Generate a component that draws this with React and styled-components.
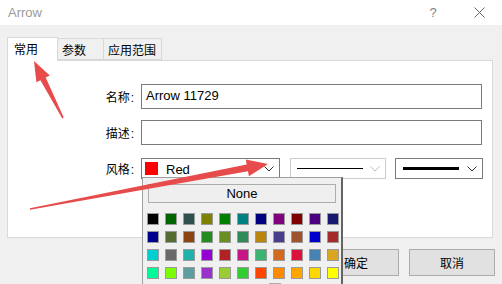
import styled, { createGlobalStyle } from 'styled-components';

const GlobalStyle = createGlobalStyle`
  html, body {
    margin: 0;
    padding: 0;
    background: #f0f0f0;
  }
  * {
    box-sizing: border-box;
  }
`;

const Window = styled.div`
  position: relative;
  width: 502px;
  height: 284px;
  overflow: hidden;
  background: #f0f0f0;
  font-family: "Noto Sans CJK SC", "Noto Sans", sans-serif;
  font-size: 12px;
  color: #000;
`;

const TitleBar = styled.div`
  height: 25px;
  background: #fff;
  display: flex;
  align-items: center;
  padding-left: 8px;
`;

const TitleText = styled.div`
  flex: 1;
  font-family: "Liberation Sans", Arial, sans-serif;
  font-size: 13px;
  color: #9a9a9a;
`;

const TitleButton = styled.div`
  width: ${p => p.$w}px;
  display: flex;
  justify-content: center;
  align-items: center;
  font-family: "Liberation Sans", Arial, sans-serif;
  font-size: 13px;
  color: #808080;
`;

const Body = styled.div`
  padding: 11px 7px 0 7px;
`;

const TabRow = styled.div`
  display: flex;
  align-items: flex-end;
  height: 24px;
  position: relative;
  z-index: 1;
`;

const Tab = styled.div`
  width: ${p => p.$w}px;
  height: ${p => (p.$active ? 24 : 22)}px;
  background: ${p => (p.$active ? '#fff' : '#f0f0f0')};
  border: 1px solid #d9d9d9;
  border-bottom: ${p => (p.$active ? 'none' : '1px solid #d9d9d9')};
  border-left: ${p => (p.$first || p.$active ? '1px solid #d9d9d9' : 'none')};
  margin-bottom: ${p => (p.$active ? -1 : 0)}px;
  padding: ${p => (p.$active ? '4px 0 0 6px' : '4px 0 0 4px')};
  font-size: 12px;
  line-height: 14px;
`;

const Panel = styled.div`
  width: 486px;
  height: 178px;
  background: #fff;
  border: 1px solid #d9d9d9;
  padding: 23px 0 0 0;
  display: grid;
  grid-template-columns: 126px auto;
  column-gap: 7px;
  align-content: start;
`;

const Label = styled.div`
  text-align: right;
  font-size: 12px;
  line-height: ${p => p.$h}px;
  height: ${p => p.$h}px;
  margin-bottom: ${p => p.$mb}px;
`;

const Colon = styled.span`
  font-family: "Liberation Sans", Arial, sans-serif;
  margin-left: 1px;
`;

const TextBox = styled.div`
  width: 341px;
  height: 25px;
  border: 1px solid #7a7a7a;
  margin-bottom: ${p => p.$mb}px;
  padding-left: 4px;
  font-family: "Liberation Sans", Arial, sans-serif;
  font-size: 13px;
  line-height: 22px;
`;

const ComboRow = styled.div`
  display: flex;
  height: 21px;
`;

const Combo = styled.div`
  width: ${p => p.$w}px;
  height: 21px;
  margin-right: ${p => p.$mr || 0}px;
  border: 1px solid ${p => (p.$disabled ? '#cccccc' : '#7a7a7a')};
  display: flex;
  align-items: center;
  padding: 0 5px 0 3px;
`;

const Swatch = styled.div`
  width: 13px;
  height: 13px;
  background: ${p => p.$c};
`;

const ComboText = styled.div`
  flex: 1;
  margin-left: 8px;
  font-family: "Liberation Sans", Arial, sans-serif;
  font-size: 13px;
  line-height: 19px;
  padding-top: 1px;
`;

const LineSample = styled.div`
  width: ${p => p.$w}px;
  height: ${p => p.$t}px;
  background: #000;
  margin-left: ${p => p.$ml}px;
  margin-right: auto;
`;

const Chevron = ({ color }) => (
  <svg width="10" height="6" viewBox="0 0 10 6">
    <polyline points="0.5,0.5 5,5 9.5,0.5" fill="none" stroke={color} strokeWidth="1" />
  </svg>
);

const ButtonRow = styled.div`
  display: flex;
  justify-content: flex-end;
  gap: 10px;
  margin-top: 11px;
  width: 488px;
`;

const Button = styled.div`
  width: 86px;
  height: 27px;
  background: #e1e1e1;
  border: 1px solid #adadad;
  display: flex;
  align-items: center;
  justify-content: center;
  font-size: 12px;
`;

const Popup = styled.div`
  position: absolute;
  left: 142px;
  top: 177px;
  width: 201px;
  height: 140px;
  background: #f0f0f0;
  border: 1px solid #a0a0a0;
  border-right: 2px solid #646464;
  padding: 6px 0 0 4px;
  z-index: 5;
`;

const NoneButton = styled.div`
  width: 188px;
  height: 19px;
  margin-left: 1px;
  border: 1px solid #adadad;
  background: #efefef;
  display: flex;
  align-items: center;
  justify-content: center;
  font-family: "Liberation Sans", Arial, sans-serif;
  font-size: 13px;
`;

const SwatchGrid = styled.div`
  display: grid;
  grid-template-columns: repeat(11, 12px);
  grid-auto-rows: 12px;
  column-gap: 6px;
  row-gap: 6px;
  margin-top: 10px;
`;

const ColorCell = styled.div`
  width: 12px;
  height: 12px;
  border: 1px solid #9a9a9a;
  background: ${p => p.$c};
`;

const MoreBox = styled.div`
  width: 12px;
  height: 8px;
  margin: 4px 0 0 122px;
  border: 1px solid #adadad;
  border-bottom: none;
  background: #f0f0f0;
`;

const Overlay = styled.svg`
  position: absolute;
  left: 0;
  top: 0;
  pointer-events: none;
  z-index: 10;
`;

const COLORS = [
  '#000000', '#006400', '#2f4f4f', '#808000', '#008000', '#008080', '#000080', '#800080', '#800000', '#4b0082', '#191970',
  '#00008b', '#556b2f', '#8b4513', '#228b22', '#6b8e23', '#2e8b57', '#b8860b', '#483d8b', '#a0522d', '#0000cd', '#a52a2a',
  '#00ced1', '#696969', '#20b2aa', '#9400d3', '#b22222', '#c71585', '#3cb371', '#d2691e', '#dc143c', '#4682b4', '#daa520',
  '#00fa9a', '#7cfc00', '#5f9ea0', '#9932cc', '#9acd32', '#32cd32', '#ff4500', '#ff8c00', '#ffa500', '#ffd700', '#ffff00',
];

// tapered annotation arrow: thin tail, thick shaft near the head
function arrowPoints([tx, ty], [px, py], headLen, headHalf, shaftHalf, tailHalf) {
  const dx = px - tx;
  const dy = py - ty;
  const len = Math.hypot(dx, dy);
  const ux = dx / len;
  const uy = dy / len;
  const nx = -uy;
  const ny = ux;
  const bx = px - ux * headLen;
  const by = py - uy * headLen;
  const pts = [
    [tx + nx * tailHalf, ty + ny * tailHalf],
    [bx + nx * shaftHalf, by + ny * shaftHalf],
    [bx + nx * headHalf, by + ny * headHalf],
    [px, py],
    [bx - nx * headHalf, by - ny * headHalf],
    [bx - nx * shaftHalf, by - ny * shaftHalf],
    [tx - nx * tailHalf, ty - ny * tailHalf],
  ];
  return pts.map(p => p.map(v => v.toFixed(1)).join(',')).join(' ');
}

export default function App() {
  return (
    <Window>
      <GlobalStyle />
      <TitleBar>
        <TitleText>Arrow</TitleText>
        <TitleButton $w={46}>?</TitleButton>
        <TitleButton $w={46}>
          <svg width="11" height="11" viewBox="0 0 11 11">
            <path d="M0.5 0.5 L10.5 10.5 M10.5 0.5 L0.5 10.5" stroke="#666" strokeWidth="1" />
          </svg>
        </TitleButton>
      </TitleBar>

      <Body>
        <TabRow>
          <Tab $w={51} $active $first>常用</Tab>
          <Tab $w={46}>参数</Tab>
          <Tab $w={58}>应用范围</Tab>
        </TabRow>

        <Panel>
          <Label $h={25} $mb={11}>名称<Colon>:</Colon></Label>
          <TextBox $mb={11}>Arrow 11729</TextBox>

          <Label $h={25} $mb={13}>描述<Colon>:</Colon></Label>
          <TextBox $mb={13} />

          <Label $h={21} $mb={0}>风格<Colon>:</Colon></Label>
          <ComboRow>
            <Combo $w={139} $mr={10}>
              <Swatch $c="#ff0000" />
              <ComboText>Red</ComboText>
              <Chevron color="#333" />
            </Combo>
            <Combo $w={96} $mr={9} $disabled>
              <LineSample $w={66} $t={1} $ml={3} />
              <Chevron color="#bbb" />
            </Combo>
            <Combo $w={88}>
              <LineSample $w={56} $t={3} $ml={4} />
              <Chevron color="#333" />
            </Combo>
          </ComboRow>
        </Panel>

        <ButtonRow>
          <Button>确定</Button>
          <Button>取消</Button>
        </ButtonRow>
      </Body>

      <Popup>
        <NoneButton>None</NoneButton>
        <SwatchGrid>
          {COLORS.map((c, i) => (
            <ColorCell key={i} $c={c} />
          ))}
        </SwatchGrid>
        <MoreBox />
      </Popup>

      <Overlay width="502" height="284" viewBox="0 0 502 284">
        <polygon points={arrowPoints([63, 118], [34, 61], 20, 7.5, 3, 0.8)} fill="#e84b4b" />
        <polygon points={arrowPoints([30, 209], [268, 164], 21, 8.5, 3.5, 0.8)} fill="#e84b4b" />
      </Overlay>
    </Window>
  );
}
